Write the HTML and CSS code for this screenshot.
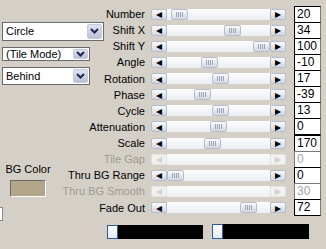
FILE: index.html
```html
<!DOCTYPE html>
<html lang="en">
<head>
  <meta charset="UTF-8" />
  <title>Tile Settings</title>
  <link rel="stylesheet" href="styles.css">
</head>
<body>
  <div class="dlg">
    <!-- left column: mode pickers and colour -->
    <div class="side">
      <div class="combo combo-wide">
        <span class="combo-text">Circle</span>
        <span class="combo-btn"><svg width="9" height="6" viewBox="0 0 9 6"><path d="M1 1 L4.5 4.5 L8 1" fill="none" stroke="#1c2a4a" stroke-width="2"/></svg></span>
      </div>
      <div class="combo combo-small">
        <span class="combo-text">(Tile Mode)</span>
        <span class="combo-btn"><svg width="9" height="6" viewBox="0 0 9 6"><path d="M1 1 L4.5 4.5 L8 1" fill="none" stroke="#1c2a4a" stroke-width="2"/></svg></span>
      </div>
      <div class="combo">
        <span class="combo-text">Behind</span>
        <span class="combo-btn"><svg width="9" height="6" viewBox="0 0 9 6"><path d="M1 1 L4.5 4.5 L8 1" fill="none" stroke="#1c2a4a" stroke-width="2"/></svg></span>
      </div>
      <div class="bg-color">
        <span>BG Color</span>
        <div class="swatch"></div>
      </div>
      <div class="stub"></div>
    </div>

    <!-- right column: slider rows -->
    <div class="params">
      <div class="lbl"><span>Number</span></div>
      <div class="slider"><span class="sb-btn">◂</span><span class="track"><span class="thumb" style="left:4px"></span></span><span class="sb-btn">▸</span></div>
      <div class="edit">20</div>

      <div class="lbl"><span>Shift X</span></div>
      <div class="slider"><span class="sb-btn">◂</span><span class="track"><span class="thumb" style="left:57px"></span></span><span class="sb-btn">▸</span></div>
      <div class="edit">34</div>

      <div class="lbl"><span>Shift Y</span></div>
      <div class="slider"><span class="sb-btn">◂</span><span class="track"><span class="thumb" style="left:86px"></span></span><span class="sb-btn">▸</span></div>
      <div class="edit">100</div>

      <div class="lbl"><span>Angle</span></div>
      <div class="slider"><span class="sb-btn">◂</span><span class="track"><span class="thumb" style="left:34px"></span></span><span class="sb-btn">▸</span></div>
      <div class="edit">-10</div>

      <div class="lbl"><span>Rotation</span></div>
      <div class="slider"><span class="sb-btn">◂</span><span class="track"><span class="thumb" style="left:45px"></span></span><span class="sb-btn">▸</span></div>
      <div class="edit">17</div>

      <div class="lbl"><span>Phase</span></div>
      <div class="slider"><span class="sb-btn">◂</span><span class="track"><span class="thumb" style="left:27px"></span></span><span class="sb-btn">▸</span></div>
      <div class="edit">-39</div>

      <div class="lbl"><span>Cycle</span></div>
      <div class="slider"><span class="sb-btn">◂</span><span class="track"><span class="thumb" style="left:45px"></span></span><span class="sb-btn">▸</span></div>
      <div class="edit">13</div>

      <div class="lbl"><span>Attenuation</span></div>
      <div class="slider"><span class="sb-btn">◂</span><span class="track"><span class="thumb" style="left:43px"></span></span><span class="sb-btn">▸</span></div>
      <div class="edit">0</div>

      <div class="lbl"><span>Scale</span></div>
      <div class="slider"><span class="sb-btn">◂</span><span class="track"><span class="thumb" style="left:37px"></span></span><span class="sb-btn">▸</span></div>
      <div class="edit">170</div>

      <div class="lbl off"><span>Tile Gap</span></div>
      <div class="slider off"><span class="sb-btn">◂</span><span class="track"></span><span class="sb-btn">▸</span></div>
      <div class="edit off">0</div>

      <div class="lbl"><span>Thru BG Range</span></div>
      <div class="slider"><span class="sb-btn">◂</span><span class="track"><span class="thumb" style="left:0px"></span></span><span class="sb-btn">▸</span></div>
      <div class="edit">0</div>

      <div class="lbl off"><span>Thru BG Smooth</span></div>
      <div class="slider off"><span class="sb-btn">◂</span><span class="track"></span><span class="sb-btn">▸</span></div>
      <div class="edit off">30</div>

      <div class="lbl"><span>Fade Out</span></div>
      <div class="slider"><span class="sb-btn">◂</span><span class="track"><span class="thumb" style="left:73px"></span></span><span class="sb-btn">▸</span></div>
      <div class="edit">72</div>
    </div>
  </div>

  <!-- gradient strips -->
  <div class="bars">
    <div class="grad grad-1"><span class="handle"></span></div>
    <div class="grad grad-2"><span class="handle"></span></div>
  </div>
</body>
</html>
```

FILE: styles.css
```css
* {
  box-sizing: border-box;
  margin: 0;
  padding: 0;
}

body {
  background: #d4d0c8;
  color: #000;
  font-family: 'Liberation Sans', Arial, sans-serif;
  font-size: 11px;
  width: 326px;
  height: 249px;
  overflow: hidden;
}

.dlg {
  display: flex;
  height: 221px;
}

/* left column */
.side {
  width: 104px;
  padding: 22px 0 0 2px;
  display: flex;
  flex-direction: column;
}

.combo {
  display: flex;
  align-items: center;
  width: 88px;
  height: 21px;
  background: #fff;
  border: 1px solid #6b6b6b;
  margin-bottom: 6px;
}

.combo-wide {
  width: 102px;
  height: 22px;
}

.combo-small {
  height: 17px;
}

.combo-text {
  flex: 1;
  padding-left: 3px;
  font-size: 11px;
}

.combo-btn {
  width: 15px;
  height: calc(100% - 2px);
  margin-right: 1px;
  display: flex;
  align-items: center;
  justify-content: center;
  background: linear-gradient(#dfe3f0, #b9bfd6);
  border: 1px solid #c4c9dc;
  border-radius: 2px;
}

.bg-color {
  display: flex;
  flex-direction: column;
  align-items: center;
  width: 52px;
  margin-top: 72px;
  gap: 5px;
}

.swatch {
  width: 36px;
  height: 17px;
  background: #b3a58a;
  border: 1px solid;
  border-color: #6d6a62 #fff #fff #6d6a62;
}

.stub {
  width: 30px;
  height: 17px;
  margin: 10px 0 0 -29px;
  background: #fff;
  border: 1px solid #8a8a8a;
}

/* slider rows */
.params {
  display: grid;
  grid-template-columns: 41px 135px 29px;
  grid-auto-rows: 16.125px;
  column-gap: 6px;
  padding-top: 6px;
  align-items: center;
}

.params .edit {
  margin-left: 2px;
}

.lbl {
  display: flex;
  justify-content: flex-end;
  white-space: nowrap;
}

.lbl.off {
  color: #9d9a93;
}

.slider {
  display: flex;
  height: 11px;
}

.sb-btn {
  width: 16px;
  height: 11px;
  display: flex;
  align-items: center;
  justify-content: center;
  font-family: 'DejaVu Sans', sans-serif;
  font-size: 12px;
  line-height: 1;
  color: #000;
  background: linear-gradient(#fbfbfd, #d3d7e3);
  border: 1px solid #b7bccb;
  border-radius: 2px;
}

.track {
  position: relative;
  flex: 1;
  background: linear-gradient(#fdfdfe, #eceef3);
}

.thumb {
  position: absolute;
  top: 0;
  width: 17px;
  height: 11px;
  background:
    linear-gradient(90deg, transparent 5px, #9ea3b3 5px, #9ea3b3 6px, transparent 6px, transparent 7px, #9ea3b3 7px, #9ea3b3 8px, transparent 8px, transparent 9px, #9ea3b3 9px, #9ea3b3 10px, transparent 10px, transparent 11px, #9ea3b3 11px, #9ea3b3 12px, transparent 12px) center / 17px 5px no-repeat,
    linear-gradient(#fbfbfd, #d3d7e3);
  border: 1px solid #b7bccb;
  border-radius: 2px;
}

.slider.off .sb-btn {
  color: #d0d0d0;
  background: #f1f1ef;
  border-color: #e2e2df;
}

.slider.off .track {
  background: linear-gradient(#fbfbfb, #f0f0f0);
}

.edit {
  height: 17px;
  background: #fff;
  border: 1px solid #000;
  border-right-color: #7a7a7a;
  font-size: 12px;
  line-height: 15px;
  padding-left: 2px;
}

.edit.off {
  color: #a5a5a5;
  border-color: #7a7a7a;
}

/* gradient strips */
.bars {
  display: flex;
  gap: 9px;
  margin-top: 3px;
  padding-left: 107px;
  align-items: flex-end;
}

.grad {
  display: flex;
  width: 96px;
  height: 14px;
  background: #000;
}

.grad-2 {
  width: 97px;
  height: 15px;
}

.handle {
  width: 11px;
  height: 100%;
  background: linear-gradient(#ffffff, #e4eaf2);
  border: 1px solid #2d5c9c;
}
```
